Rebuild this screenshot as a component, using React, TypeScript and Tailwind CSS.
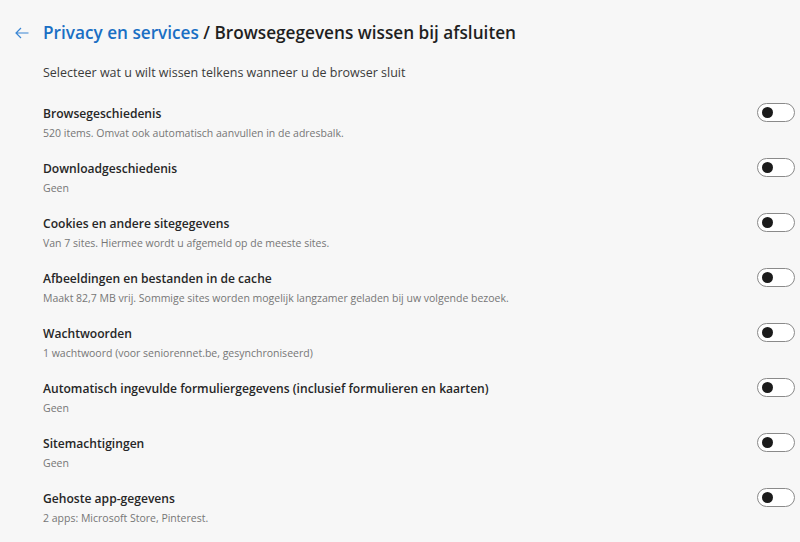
const rows = [
  { title: 'Browsegeschiedenis', sub: '520 items. Omvat ook automatisch aanvullen in de adresbalk.' },
  { title: 'Downloadgeschiedenis', sub: 'Geen' },
  { title: 'Cookies en andere sitegegevens', sub: 'Van 7 sites. Hiermee wordt u afgemeld op de meeste sites.' },
  { title: 'Afbeeldingen en bestanden in de cache', sub: 'Maakt 82,7 MB vrij. Sommige sites worden mogelijk langzamer geladen bij uw volgende bezoek.' },
  { title: 'Wachtwoorden', sub: '1 wachtwoord (voor seniorennet.be, gesynchroniseerd)' },
  { title: 'Automatisch ingevulde formuliergegevens (inclusief formulieren en kaarten)', sub: 'Geen' },
  { title: 'Sitemachtigingen', sub: 'Geen' },
  { title: 'Gehoste app-gegevens', sub: '2 apps: Microsoft Store, Pinterest.' },
]

function Toggle() {
  return (
    <div className="w-[38px] h-[19px] rounded-full border border-[#8a8a8a] bg-white flex items-center pl-[4px]">
      <div className="w-[11px] h-[11px] rounded-full bg-[#1b1b1b]" />
    </div>
  )
}

export default function App() {
  return (
    <div className="w-[800px] h-[542px] overflow-hidden bg-[#f7f7f7] font-['Open_Sans',sans-serif]">
      <div className="flex items-center h-[34px] mt-[16px] pl-[14px]">
        <svg className="w-[16px] h-[16px] text-[#3a86d4]" viewBox="0 0 16 16" fill="none" stroke="currentColor" strokeWidth={1.2}>
          <path d="M14.5 8H2M7 3L2 8l5 5" />
        </svg>
        <h1 className="ml-[13px] text-[17.2px] font-semibold text-[#1f1f1f]">
          <span className="text-[#1a6fc4]">Privacy en services</span> / Browsegegevens wissen bij afsluiten
        </h1>
      </div>
      <p className="ml-[43px] mt-[14px] text-[12.5px] text-[#3b3b3b]">
        Selecteer wat u wilt wissen telkens wanneer u de browser sluit
      </p>
      <div className="mt-[12px] flex flex-col">
        {rows.map((r) => (
          <div key={r.title} className="flex items-start justify-between h-[55px] pt-[10px] pl-[43px] pr-[5px]">
            <div className="flex flex-col">
              <span className="text-[12.1px] font-semibold text-[#262626] leading-[18px]">{r.title}</span>
              <span className="text-[10.5px] text-[#767676] leading-[16px] mt-[2px]">{r.sub}</span>
            </div>
            <div className="-mt-[2px]">
              <Toggle />
            </div>
          </div>
        ))}
      </div>
    </div>
  )
}
